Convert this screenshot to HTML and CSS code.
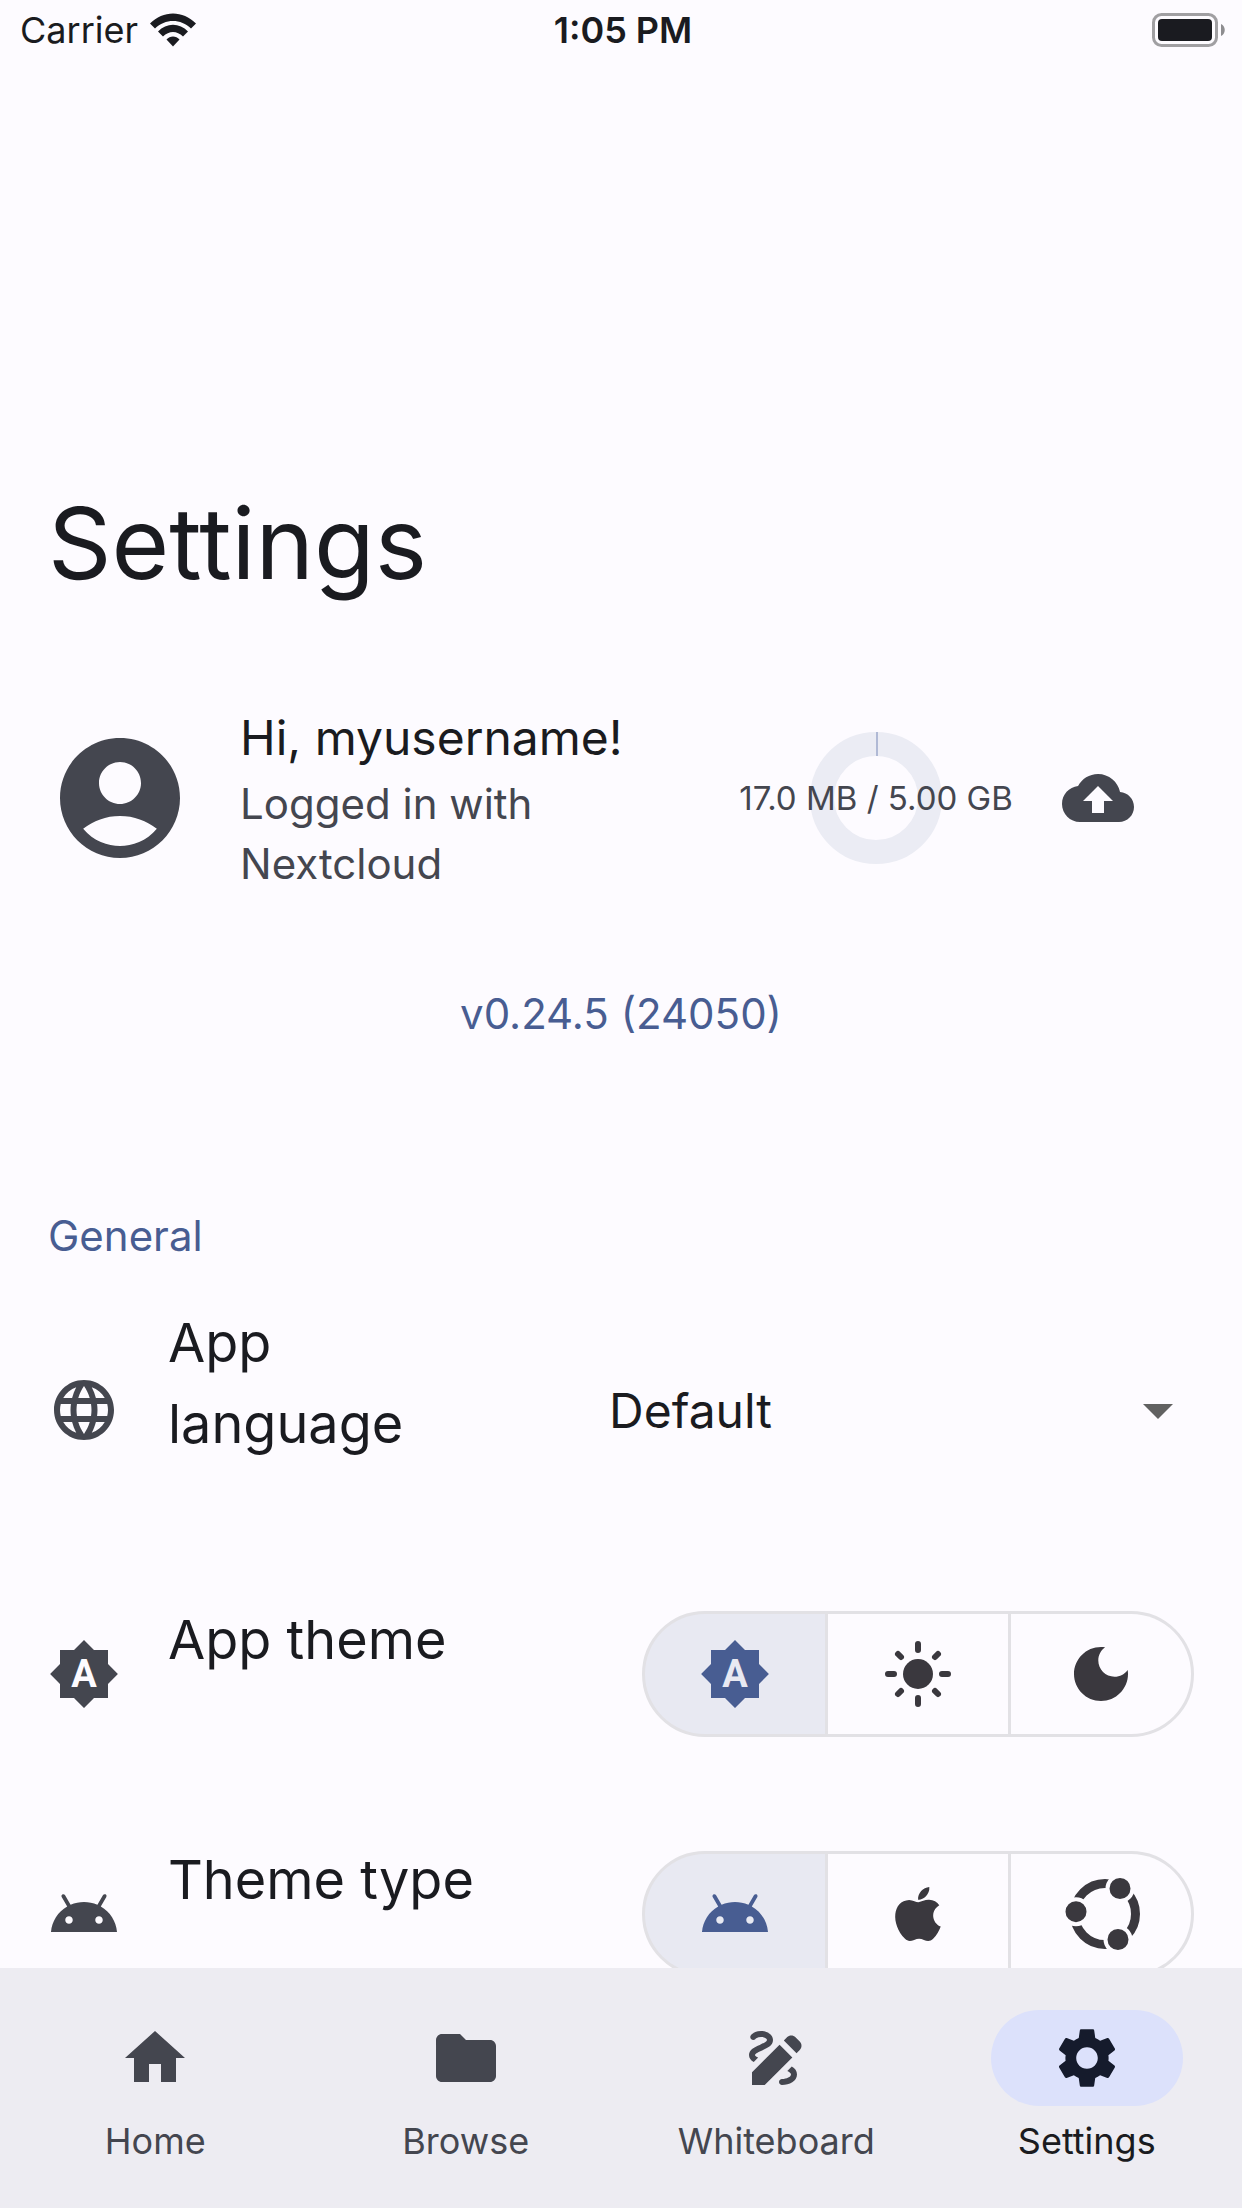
FILE: index.html
```html
<!DOCTYPE html>
<html lang="en">
<head>
<meta charset="utf-8">
<meta name="viewport" content="width=device-width, initial-scale=1">
<title>Settings</title>
<link rel="stylesheet" href="styles.css">
</head>
<body>
<div class="app">
  <header class="status-bar">
    <div class="carrier">
      <span>Carrier</span>
      <svg class="wifi" viewBox="0 0 46 34" aria-label="Wi-Fi">
        <path d="M0 10.500C13-3 33-3 46 10.500L41 15.500C31 5.500 15 5.500 5 15.500Z"/>
        <path d="M8 18.500C16.500 9.500 29.500 9.500 38 18.500L33 23.500C27 17.500 19 17.500 13 23.500Z"/>
        <path d="M16.500 26.500C20 22.500 26 22.500 29.500 26.500L23 33.500Z"/>
      </svg>
    </div>
    <time class="clock">1:05 PM</time>
    <svg class="battery" viewBox="0 0 74 34" aria-label="Battery full">
      <rect x="1.500" y="1.500" width="63" height="31" rx="8" fill="none" stroke="#a09fa2" stroke-width="3"/>
      <rect x="6" y="6" width="54" height="22" rx="4"/>
      <path d="M69 11C74 13 74 21 69 23Z" fill="#8e8d90"/>
    </svg>
  </header>

  <main class="content">
    <h1 class="title">Settings</h1>

    <section class="account">
      <svg class="avatar" viewBox="0 0 24 24" aria-hidden="true"><path d="M12 2C6.480 2 2 6.480 2 12s4.480 10 10 10 10-4.480 10-10S17.520 2 12 2zm0 4c1.930 0 3.500 1.570 3.500 3.500S13.930 13 12 13s-3.500-1.570-3.500-3.500S10.070 6 12 6zm0 14c-2.030 0-4.430-.82-6.140-2.880C7.550 15.800 9.680 15 12 15s4.450.8 6.140 2.120C16.430 19.180 14.030 20 12 20z"/></svg>
      <div class="account-text">
        <p class="greeting">Hi, myusername!</p>
        <p class="detail">Logged in with Nextcloud</p>
      </div>
      <div class="quota">
        <svg class="quota-ring" viewBox="0 0 132 132" aria-hidden="true">
          <circle cx="66" cy="66" r="54" fill="none" stroke="#ebecf4" stroke-width="24"/>
          <path d="M67 0V24" stroke="#b0b9d5" stroke-width="2"/>
        </svg>
        <span class="quota-text">17.0 MB / 5.00 GB</span>
      </div>
      <button class="upload" type="button" aria-label="Sync now">
        <svg class="icon" viewBox="0 0 24 24"><path d="M19.350 10.040C18.670 6.590 15.640 4 12 4 9.110 4 6.600 5.640 5.350 8.040 2.340 8.360 0 10.910 0 14c0 3.310 2.690 6 6 6h13c2.760 0 5-2.240 5-5 0-2.640-2.050-4.780-4.650-4.960zM14 13v4h-4v-4H7l5-5 5 5h-3z"/></svg>
      </button>
    </section>

    <a class="version" href="#version">v0.24.5 (24050)</a>

    <section>
      <h2 class="group-title">General</h2>

      <div class="row row-wrapped">
        <svg class="icon" viewBox="0 0 24 24" aria-hidden="true"><path d="M11.990 2C6.470 2 2 6.480 2 12s4.470 10 9.990 10C17.520 22 22 17.520 22 12S17.520 2 11.990 2zm6.930 6h-2.950c-.32-1.250-.78-2.450-1.380-3.560 1.840.63 3.370 1.910 4.330 3.560zM12 4.040c.83 1.200 1.480 2.530 1.910 3.960h-3.820c.43-1.430 1.080-2.760 1.910-3.960zM4.260 14C4.100 13.360 4 12.690 4 12s.1-1.360.26-2h3.380c-.08.66-.14 1.320-.14 2s.06 1.340.14 2H4.260zm.82 2h2.950c.32 1.250.78 2.450 1.380 3.560-1.840-.63-3.370-1.900-4.330-3.560zm2.950-8H5.080c.96-1.660 2.490-2.930 4.330-3.560C8.810 5.550 8.350 6.750 8.030 8zM12 19.960c-.83-1.200-1.480-2.530-1.910-3.960h3.820c-.43 1.430-1.080 2.760-1.910 3.960zM14.340 14H9.660c-.09-.66-.16-1.320-.16-2s.07-1.350.16-2h4.680c.09.65.16 1.320.16 2s-.07 1.340-.16 2zm.25 5.560c.6-1.110 1.060-2.310 1.380-3.560h2.950c-.96 1.650-2.490 2.930-4.330 3.560zM16.360 14c.08-.66.14-1.320.14-2s-.06-1.340-.14-2h3.380c.16.64.26 1.310.26 2s-.1 1.360-.26 2h-3.380z"/></svg>
        <label class="row-label" for="language">App language</label>
        <div class="select">
          <select id="language"><option>Default</option></select>
          <svg class="select-arrow" viewBox="0 0 24 24" aria-hidden="true"><path d="M7 10l5 5 5-5z"/></svg>
        </div>
      </div>

      <div class="row">
        <svg class="icon" viewBox="0 0 72 72" aria-hidden="true"><path d="M60 26V12H46L36 2.100L26 12H12V26L2.100 36L12 46V60H26L36 69.900L46 60H60V46L69.900 36Z"/><text class="icon-letter" x="36" y="49" text-anchor="middle">A</text></svg>
        <span class="row-label" id="theme-label">App theme</span>
        <div class="segments" role="radiogroup" aria-labelledby="theme-label">
          <label class="segment"><input type="radio" name="theme" aria-label="System" checked><svg class="icon" viewBox="0 0 72 72"><path d="M60 26V12H46L36 2.100L26 12H12V26L2.100 36L12 46V60H26L36 69.900L46 60H60V46L69.900 36Z"/><text class="icon-letter" x="36" y="49" text-anchor="middle">A</text></svg></label>
          <label class="segment"><input type="radio" name="theme" aria-label="Light"><svg class="icon" viewBox="-36 -36 72 72"><circle r="15"/><path class="rays" d="M0-30V-24M0 30V24M-30 0H-24M30 0H24M-20-20L-17-17M20-20L17-17M-20 20L-17 17M20 20L17 17"/></svg></label>
          <label class="segment"><input type="radio" name="theme" aria-label="Dark"><svg class="icon" viewBox="0 0 24 24"><path d="M12 3c-4.970 0-9 4.030-9 9s4.030 9 9 9 9-4.030 9-9c0-.46-.04-.92-.1-1.360-.98 1.370-2.580 2.260-4.400 2.260-2.980 0-5.400-2.420-5.400-5.400 0-1.810.89-3.420 2.260-4.400C12.920 3.040 12.460 3 12 3z"/></svg></label>
        </div>
      </div>

      <div class="row">
        <svg class="icon" viewBox="0 0 24 24" aria-hidden="true"><path d="M17.6 9.480l1.840-3.180c.16-.31.04-.69-.26-.85-.29-.15-.65-.06-.83.22l-1.880 3.240c-2.860-1.210-6.080-1.210-8.940 0L5.650 5.670c-.19-.29-.58-.38-.87-.2-.28.18-.37.54-.22.83L6.400 9.480C3.300 11.250 1.280 14.440 1 18h22c-.28-3.560-2.300-6.750-5.400-8.520zM7 15.250c-.69 0-1.250-.56-1.250-1.250S6.310 12.750 7 12.750 8.250 13.310 8.250 14 7.690 15.250 7 15.250zM17 15.250c-.69 0-1.250-.56-1.250-1.250s.56-1.250 1.250-1.250 1.250.56 1.250 1.250-.56 1.250-1.250 1.250z"/></svg>
        <span class="row-label" id="platform-label">Theme type</span>
        <div class="segments" role="radiogroup" aria-labelledby="platform-label">
          <label class="segment"><input type="radio" name="platform" aria-label="Material" checked><svg class="icon" viewBox="0 0 24 24"><path d="M17.6 9.480l1.840-3.180c.16-.31.04-.69-.26-.85-.29-.15-.65-.06-.83.22l-1.880 3.240c-2.860-1.210-6.080-1.210-8.940 0L5.650 5.670c-.19-.29-.58-.38-.87-.2-.28.18-.37.54-.22.83L6.400 9.480C3.300 11.250 1.280 14.440 1 18h22c-.28-3.560-2.300-6.750-5.400-8.520zM7 15.250c-.69 0-1.250-.56-1.250-1.250S6.310 12.750 7 12.750 8.250 13.310 8.250 14 7.690 15.250 7 15.250zM17 15.250c-.69 0-1.250-.56-1.250-1.250s.56-1.250 1.250-1.250 1.250.56 1.250 1.250-.56 1.250-1.250 1.250z"/></svg></label>
          <label class="segment"><input type="radio" name="platform" aria-label="Cupertino"><svg class="icon" viewBox="0 0 24 24"><path d="M17.050 20.280c-.98.95-2.050.8-3.080.35-1.090-.46-2.090-.48-3.240 0-1.440.62-2.200.44-3.060-.35C2.790 15.250 3.510 7.590 9.050 7.310c1.350.07 2.290.74 3.080.8 1.180-.24 2.310-.93 3.570-.84 1.510.12 2.650.72 3.400 1.800-3.120 1.870-2.380 5.980.48 7.130-.57 1.500-1.310 2.990-2.540 4.090zM12.030 7.250c-.15-2.230 1.660-4.070 3.740-4.250.29 2.580-2.340 4.500-3.740 4.250z"/></svg></label>
          <label class="segment"><input type="radio" name="platform" aria-label="Yaru"><svg class="icon" viewBox="-36 -36 72 72">
            <circle class="ring" cx="4" r="30.500"/>
            <g class="ring-dots"><circle cx="19" cy="-25.500" r="12.500"/><circle cx="-25" cy="-2.300" r="12.500"/><circle cx="17" cy="25.500" r="12.500"/></g>
          </svg></label>
        </div>
      </div>
    </section>
  </main>

  <nav class="tabs" aria-label="Main">
    <a class="tab" href="#home"><span class="pill"><svg class="icon" viewBox="0 0 24 24"><path d="M10 20v-6h4v6h5v-8h3L12 3 2 12h3v8z"/></svg></span>Home</a>
    <a class="tab" href="#browse"><span class="pill"><svg class="icon" viewBox="0 0 24 24"><path d="M10 4H4c-1.100 0-1.990.9-1.990 2L2 18c0 1.100.9 2 2 2h16c1.100 0 2-.9 2-2V8c0-1.100-.9-2-2-2h-8l-2-2z"/></svg></span>Browse</a>
    <a class="tab" href="#whiteboard"><span class="pill"><svg class="icon" viewBox="0 0 24 24"><path d="M18.850 10.390l1.060-1.060c.78-.78.78-2.050 0-2.830L18.500 5.090c-.78-.78-2.050-.78-2.830 0l-1.060 1.060 4.240 4.240zM13.190 7.560L4 16.760V21h4.240l9.200-9.190-4.250-4.250zM19 17.500c0 2.190-2.540 3.500-5 3.500-.55 0-1-.45-1-1s.45-1 1-1c1.540 0 3-.73 3-1.500 0-.47-.48-.87-1.230-1.200l1.480-1.480C18.320 15.450 19 16.290 19 17.500zM4.580 13.350C3.610 12.790 3 12.060 3 11c0-1.800 1.890-2.630 3.560-3.360C7.590 7.180 9 6.560 9 6c0-.41-.78-1-2-1-1.260 0-1.800.61-1.830.64-.35.41-.98.46-1.400.12-.41-.34-.49-.95-.15-1.380C3.730 4.240 4.760 3 7 3s4 1.320 4 3c0 1.870-1.930 2.720-3.640 3.470C6.420 9.880 5 10.500 5 11c0 .31.43.6 1.070.86l-1.490 1.490z"/></svg></span>Whiteboard</a>
    <a class="tab tab-current" href="#settings" aria-current="page"><span class="pill"><svg class="icon" viewBox="0 0 24 24"><path d="M19.140 12.940c.04-.3.06-.61.06-.94 0-.32-.02-.64-.07-.94l2.030-1.580c.18-.14.23-.41.12-.61l-1.920-3.320c-.12-.22-.37-.29-.59-.22l-2.390.96c-.5-.38-1.030-.7-1.620-.94L14.400 2.810c-.04-.24-.24-.41-.48-.41h-3.840c-.24 0-.43.17-.47.41L9.250 5.350C8.660 5.590 8.120 5.920 7.630 6.290L5.240 5.330c-.22-.08-.47 0-.59.22L2.740 8.870C2.620 9.080 2.660 9.340 2.860 9.480l2.030 1.580C4.840 11.360 4.800 11.690 4.800 12s.02.64.07.94l-2.030 1.580c-.18.14-.23.41-.12.61l1.920 3.320c.12.22.37.29.59.22l2.390-.96c.5.38 1.030.7 1.620.94l.36 2.540c.05.24.24.41.48.41h3.840c.24 0 .44-.17.47-.41l.36-2.540c.59-.24 1.130-.56 1.620-.94l2.390.96c.22.08.47 0 .59-.22l1.920-3.320c.12-.22.07-.47-.12-.61L19.140 12.940zM12 15.600c-1.980 0-3.600-1.620-3.600-3.600s1.620-3.600 3.600-3.600 3.600 1.620 3.600 3.600S13.980 15.600 12 15.600z"/></svg></span>Settings</a>
  </nav>
</div>
</body>
</html>
```
FILE: styles.css
```css
:root {
  --surface: #fdfbff;
  --text: #1a1b20;
  --muted: #44464f;
  --primary: #485d92;
  --outline: #e2e1e5;
  --selected: #e8e9f2;
  --nav: #edecf2;
  --indicator: #dce1fb;
}

* { box-sizing: border-box; }

body, h1, h2, p { margin: 0; }

body {
  background: var(--surface);
  color: var(--text);
  font-family: Inter, "Liberation Sans", sans-serif;
  font-optical-sizing: none;
}

.app {
  display: flex;
  flex-direction: column;
  height: 100vh;
}

.icon {
  flex: none;
  display: block;
  width: 72px;
  height: 72px;
  fill: currentColor;
}

.icon-letter {
  font: 700 38px Roboto, "Liberation Sans", sans-serif;
  fill: var(--icon-cutout, var(--surface));
}

/* Status bar */
.status-bar {
  flex: none;
  display: grid;
  grid-template-columns: 1fr auto 1fr;
  align-items: center;
  height: 60px;
  padding: 0 16px 0 20px;
  font-size: 36px;
  line-height: 60px;
}

.carrier {
  display: flex;
  align-items: center;
  gap: 12px;
}

.wifi { width: 46px; height: 34px; fill: var(--text); }

.clock { font-weight: 600; }

.battery {
  justify-self: end;
  width: 74px;
  height: 34px;
  fill: var(--text);
}

/* Scrolling content */
.content {
  flex: 1;
  min-height: 0;
  overflow: hidden;
  display: flex;
  flex-direction: column;
}

.title {
  margin: 423px 48px 99px;
  font-size: 99px;
  font-weight: 400;
  line-height: 120px;
}

.account {
  display: flex;
  align-items: center;
  padding: 0 72px 0 48px;
  color: var(--muted);
}

.avatar {
  flex: none;
  width: 144px;
  height: 144px;
  fill: currentColor;
}

.account-text {
  flex: 1;
  padding: 0 48px;
}

.greeting {
  color: var(--text);
  font-size: 48px;
  line-height: 72px;
}

.detail {
  font-size: 42px;
  line-height: 60px;
}

.quota {
  flex: none;
  display: grid;
  place-items: center;
  width: 300px;
}

.quota > * { grid-area: 1 / 1; }

.quota-ring { width: 132px; height: 132px; }

.quota-text {
  position: relative;
  font-size: 33px;
  line-height: 48px;
}

.upload {
  flex: none;
  display: grid;
  place-items: center;
  width: 144px;
  height: 144px;
  padding: 0;
  border: 0;
  background: none;
  color: inherit;
}

.version {
  align-self: center;
  margin: 90px 0 162px;
  color: var(--primary);
  font-size: 42px;
  line-height: 60px;
  text-decoration: none;
}

.group-title {
  padding: 0 48px;
  color: var(--primary);
  font-size: 42px;
  font-weight: 400;
  line-height: 60px;
}

.row {
  display: flex;
  align-items: center;
  gap: 48px;
  min-height: 240px;
  padding: 0 48px;
  color: var(--muted);
}

.row-wrapped { min-height: 288px; }

.row-label {
  flex: 1;
  padding-bottom: 69px;
  color: var(--text);
  font-size: 54px;
  line-height: 81px;
}

.row-wrapped .row-label { padding-bottom: 54px; }

.select {
  flex: none;
  display: grid;
  align-items: center;
  width: 660px;
}

.select > * { grid-area: 1 / 1; }

.select select {
  width: 100%;
  height: 144px;
  padding: 0 75px;
  border: 0;
  background: none;
  color: var(--text);
  font: inherit;
  font-size: 48px;
  appearance: none;
}

.select-arrow {
  justify-self: end;
  width: 72px;
  height: 72px;
  fill: #616161;
  pointer-events: none;
}

.segments {
  flex: none;
  display: flex;
  gap: 3px;
  border: 3px solid var(--outline);
  border-radius: 63px;
  background: var(--outline);
  overflow: hidden;
}

.segment {
  display: grid;
  place-items: center;
  width: 180px;
  height: 120px;
  background: var(--surface);
  color: #3a383e;
}

.segment:has(:checked) {
  --icon-cutout: var(--selected);
  background: var(--selected);
  color: var(--primary);
}

.segment > * { grid-area: 1 / 1; }

.segment input {
  width: 100%;
  height: 100%;
  margin: 0;
  appearance: none;
}

.segment .icon { pointer-events: none; overflow: visible; }

.rays {
  fill: none;
  stroke: currentColor;
  stroke-width: 6;
  stroke-linecap: round;
}

.ring { fill: none; stroke: currentColor; stroke-width: 9; }

.ring-dots { stroke: var(--surface); stroke-width: 4; }

/* Bottom navigation */
.tabs {
  flex: none;
  display: flex;
  height: 240px;
  background: var(--nav);
}

.tab {
  flex: 1;
  display: flex;
  flex-direction: column;
  align-items: center;
  gap: 11px;
  padding-top: 42px;
  color: var(--muted);
  font-size: 36px;
  line-height: 48px;
  text-decoration: none;
}

.tab-current { color: var(--text); }

.pill {
  display: grid;
  place-items: center;
  width: 192px;
  height: 96px;
  border-radius: 48px;
}

.tab-current .pill {
  background: var(--indicator);
  color: #151b2c;
}
```
